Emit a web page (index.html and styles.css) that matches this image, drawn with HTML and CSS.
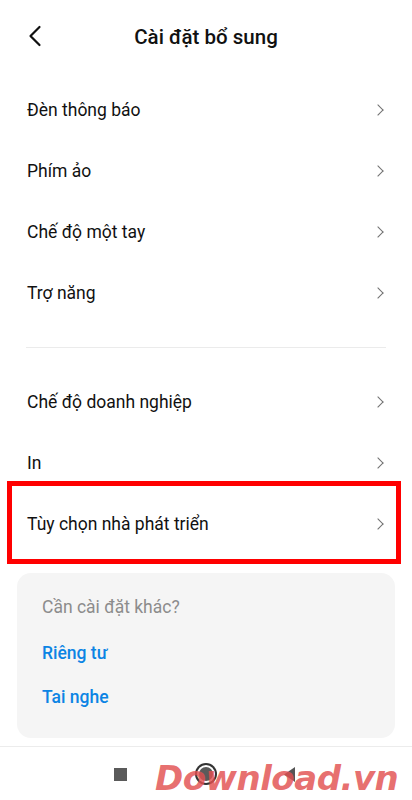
FILE: index.html
```html
<!DOCTYPE html>
<html lang="vi">
<head>
    <meta charset="UTF-8">
    <meta name="viewport" content="width=device-width, initial-scale=1.0">
    <title>Cài đặt bổ sung</title>
    <link rel="stylesheet" href="styles.css">
</head>
<body>
    <div class="screen">
        <div class="header">
            <svg class="back" width="14" height="22" viewBox="0 0 14 22">
                <path d="M11.5 2 L2.5 11 L11.5 20" fill="none" stroke="#111" stroke-width="2.2" stroke-linecap="round" stroke-linejoin="round"/>
            </svg>
            <h1 class="title">Cài đặt bổ sung</h1>
        </div>

        <div class="list">
            <div class="row"><span>Đèn thông báo</span><i class="chev"></i></div>
            <div class="row"><span>Phím ảo</span><i class="chev"></i></div>
            <div class="row"><span>Chế độ một tay</span><i class="chev"></i></div>
            <div class="row"><span>Trợ năng</span><i class="chev"></i></div>
        </div>

        <div class="divider"></div>

        <div class="list">
            <div class="row"><span>Chế độ doanh nghiệp</span><i class="chev"></i></div>
            <div class="row"><span>In</span><i class="chev"></i></div>
            <div class="row marked"><span>Tùy chọn nhà phát triển</span><i class="chev"></i></div>
        </div>

        <div class="card">
            <p class="card-head">Cần cài đặt khác?</p>
            <a class="card-link">Riêng tư</a>
            <a class="card-link">Tai nghe</a>
        </div>

        <div class="navbar">
            <span class="nav-square"></span>
            <span class="nav-home"></span>
            <svg class="nav-back" width="13" height="17" viewBox="0 0 13 17">
                <path d="M12 1 L12 16 L1 8.5 Z" fill="#555"/>
            </svg>
            <span class="watermark">Download.vn</span>
        </div>
    </div>
</body>
</html>
```

FILE: styles.css
```css
body {
    margin: 0;
    background: #fff;
    font-family: Roboto, "Noto Sans", sans-serif;
    color: #111;
}
.screen {
    width: 412px;
    height: 800px;
    position: relative;
    overflow: hidden;
}
.header {
    height: 74px;
    display: flex;
    align-items: center;
    justify-content: center;
    position: relative;
}
.back {
    position: absolute;
    left: 28px;
    top: 25px;
}
.title {
    margin: 0;
    font-size: 20.5px;
    font-weight: 500;
}
.list {
    padding-top: 5px;
}
.divider + .list {
    padding-top: 23px;
}
.row {
    height: 61px;
    display: flex;
    align-items: center;
    justify-content: space-between;
    padding: 0 27px;
    font-size: 17.5px;
    position: relative;
}
.chev {
    width: 7px;
    height: 7px;
    border-top: 1.6px solid #707070;
    border-right: 1.6px solid #707070;
    transform: rotate(45deg);
    margin-right: 3px;
}
.marked::after {
    content: "";
    position: absolute;
    left: 7px;
    right: 11px;
    top: -12px;
    bottom: -10px;
    border: 5px solid #f00;
}
.divider {
    height: 1px;
    background: #ebebeb;
    margin: 24px 26px 0;
}
.card {
    margin: 19px 17px 0;
    height: 165px;
    box-sizing: border-box;
    background: #f5f5f5;
    border-radius: 14px;
    padding: 24px 25px 0;
}
.card-head {
    margin: 0 0 26px;
    font-size: 17.5px;
    color: #8c8c8c;
}
.card-link {
    display: block;
    font-size: 17.5px;
    font-weight: 500;
    color: #0c84e4;
    margin-bottom: 24px;
}
.navbar {
    margin-top: 8px;
    border-top: 1px solid #ececec;
    height: 54px;
    display: flex;
    align-items: center;
    position: relative;
}
.nav-square {
    width: 13px;
    height: 13px;
    background: #5a5a5a;
    margin-left: 114px;
}
.nav-home {
    width: 14px;
    height: 14px;
    border-radius: 50%;
    background: #5a5a5a;
    box-shadow: 0 0 0 2px #fff, 0 0 0 4px #333;
    margin-left: 72px;
}
.nav-back {
    margin-left: 70px;
}
.watermark {
    position: absolute;
    left: 155px;
    top: 11px;
    font-family: "DejaVu Sans", sans-serif;
    font-size: 34px;
    font-weight: 700;
    font-style: italic;
    letter-spacing: -0.5px;
    color: rgba(226, 80, 80, 0.82);
}
```
